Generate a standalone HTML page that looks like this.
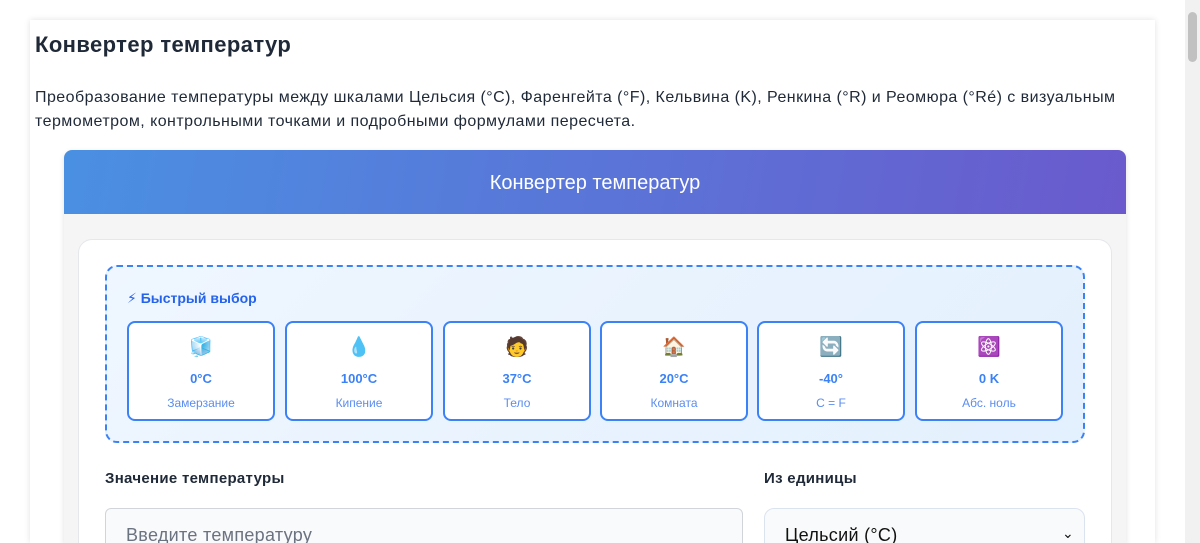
<!DOCTYPE html>
<html><head><meta charset="utf-8"><style>
*{box-sizing:border-box}
html,body{margin:0;width:1200px;height:543px;overflow:hidden}
body{background:#fff;font-family:"Liberation Sans","DejaVu Sans",sans-serif;color:#1f2937;position:relative}
.outer{position:absolute;left:30px;top:20px;width:1125px;height:523px;background:#fff;box-shadow:0 0 6px rgba(0,0,0,.12);overflow:hidden}
h1{position:absolute;left:5px;top:12px;margin:0;font-size:22px;font-weight:bold;color:#1f2937;letter-spacing:0.4px}
.desc{position:absolute;left:5px;top:66px;width:1100px;font-size:16px;line-height:24px;color:#1f2937;letter-spacing:0.45px}
.conv{position:absolute;left:34px;top:130px;width:1062px;height:393px;background:#f5f5f6;border-radius:8px 8px 0 0;overflow:hidden;box-shadow:0 2px 6px rgba(0,0,0,.12)}
.hdr{height:64px;background:linear-gradient(100deg,#4a90e2,#6a5acd);color:#fff;font-size:20px;text-align:center;line-height:66px}
.card{position:absolute;left:14px;top:89px;width:1034px;height:400px;background:#fff;border-radius:14px;border:1px solid #e5e7eb}
.quick{position:absolute;left:26px;top:25px;width:980px;height:178px;border:2px dashed #3b82f6;border-radius:12px;background:linear-gradient(135deg,#eff6ff,#e3f0fd)}
.qt{position:absolute;left:20px;top:23px;font-size:14px;font-weight:bold;color:#2563eb}
.tile{position:absolute;top:54px;width:148px;height:100px;background:#fff;border:2px solid #3b82f6;border-radius:8px;text-align:center}
.ic{font-size:19px;margin-top:13px;height:24px;line-height:24px}
.v{font-size:13px;font-weight:bold;color:#3b82f6;margin-top:11px}
.l{font-size:12px;color:#5b8def;margin-top:10px}
.lab{position:absolute;top:230px;font-size:15px;font-weight:bold;color:#1f2937;letter-spacing:0.3px}
.inp{position:absolute;top:268px;height:60px;border:1px solid #d1d5db;border-radius:6px;background:#f9fafb;font-size:18px;padding:16px 20px;color:#6b7280;letter-spacing:0.3px}
.sb{position:absolute;right:0;top:0;width:15px;height:543px;background:#f1f1f1}
.sb div{position:absolute;left:3px;top:12px;width:9px;height:50px;background:#c1c1c1;border-radius:5px}
</style></head><body>
<div class="outer">
<h1>Конвертер температур</h1>
<div class="desc">Преобразование температуры между шкалами Цельсия (°C), Фаренгейта (°F), Кельвина (K), Ренкина (°R) и Реомюра (°Ré) с визуальным термометром, контрольными точками и подробными формулами пересчета.</div>
<div class="conv">
<div class="hdr">Конвертер температур</div>
<div class="card">
<div class="quick">
<div class="qt">⚡ Быстрый выбор</div>
<div class="tile" style="left:20px"><div class="ic">🧊</div><div class="v">0°C</div><div class="l">Замерзание</div></div>
<div class="tile" style="left:178px"><div class="ic">💧</div><div class="v">100°C</div><div class="l">Кипение</div></div>
<div class="tile" style="left:336px"><div class="ic">🧑</div><div class="v">37°C</div><div class="l">Тело</div></div>
<div class="tile" style="left:493px"><div class="ic">🏠</div><div class="v">20°C</div><div class="l">Комната</div></div>
<div class="tile" style="left:650px"><div class="ic">🔄</div><div class="v">-40°</div><div class="l">C = F</div></div>
<div class="tile" style="left:808px"><div class="ic">⚛️</div><div class="v">0 K</div><div class="l">Абс. ноль</div></div>
</div>
<div class="lab" style="left:26px">Значение температуры</div>
<div class="lab" style="left:685px">Из единицы</div>
<div class="inp" style="left:26px;width:638px">Введите температуру</div>
<div class="inp" style="left:685px;width:321px;color:#111;border-color:#dbe3ef;border-radius:10px">Цельсий (°C)<span style="position:absolute;right:10px;top:16px;font-size:14px">&#8964;</span></div>
</div>
</div>
</div>
<div class="sb"><div></div></div>
</body></html>
